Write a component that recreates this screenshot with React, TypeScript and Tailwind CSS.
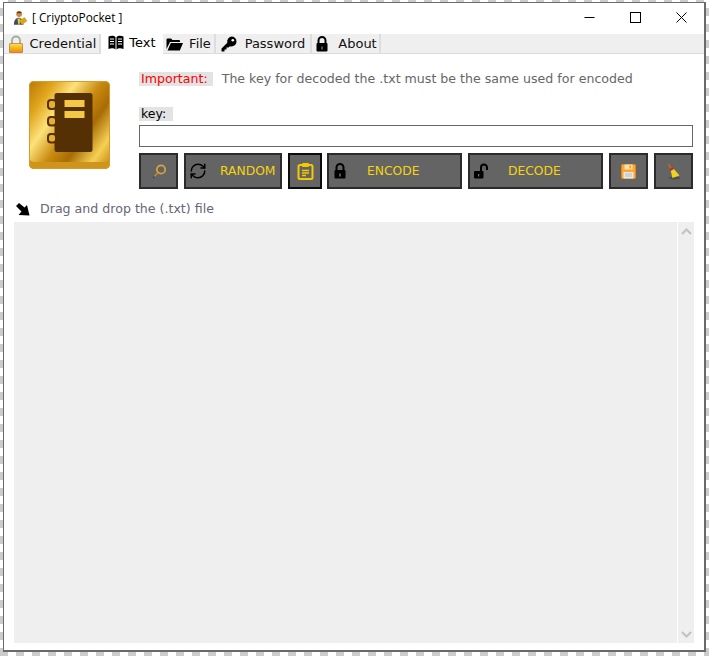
import { RefreshCw } from 'lucide-react';
import type { ReactNode } from 'react';

const uiFont = 'font-["DejaVu_Sans",sans-serif]';

function Padlock({ open = false, size = 16 }: { open?: boolean; size?: number }) {
  return (
    <svg width={size} height={size} viewBox="0 0 16 16">
      {open ? (
        <>
          <path d="M8 8V4.500a3 3 0 0 1 6 0V7" fill="none" stroke="#000" strokeWidth="2" />
          <rect x="1" y="8" width="9.500" height="7.500" rx="1" fill="#000" />
          <rect x="5.200" y="11" width="1" height="2.500" fill="#888" />
        </>
      ) : (
        <>
          <path d="M4.500 8V4.500a3.500 3.500 0 0 1 7 0V8" fill="none" stroke="#000" strokeWidth="2" />
          <rect x="2.500" y="7" width="11" height="8.500" rx="1" fill="#000" />
          <rect x="7.500" y="10.500" width="1" height="3" fill="#aaa" />
        </>
      )}
    </svg>
  );
}

function GoldLock() {
  return (
    <svg width="16" height="18" viewBox="0 0 16 18">
      <defs>
        <linearGradient id="lockBody" x1="0" y1="0" x2="0" y2="1">
          <stop offset="0" stopColor="#ffe14d" />
          <stop offset="1" stopColor="#f08a00" />
        </linearGradient>
      </defs>
      <path d="M4 9V5.500a4 4 0 0 1 8 0V9" fill="none" stroke="#a8a8a0" strokeWidth="1.800" />
      <rect x="1.500" y="8.500" width="13" height="9" rx="0.500" fill="url(#lockBody)" stroke="#9a6a10" strokeWidth="0.600" />
    </svg>
  );
}

function BookIcon() {
  return (
    <svg width="16" height="15" viewBox="0 0 16 15">
      <path d="M0.500 1.500C3 0.500 6 0.500 7.500 2v12.500C6 13 3 13 0.500 14zM15.500 1.500C13 0.500 10 0.500 8.500 2v12.500c1.500-1.500 4.500-1.500 7-.5z" fill="#000" />
      <path d="M2 4h4M2 6.500h4M2 9h4M10 4h4M10 6.500h4M10 9h4" stroke="#fff" strokeWidth="1" />
    </svg>
  );
}

function FolderIcon() {
  return (
    <svg width="17" height="14" viewBox="0 0 17 14">
      <path d="M0.500 12V2.500a1 1 0 0 1 1-1h3.500l1.500 1.500H13a1 1 0 0 1 1 1V5H4L0.500 12z" fill="#000" />
      <path d="M1.500 13.500L4.800 6H17l-3.200 7.500z" fill="#000" />
    </svg>
  );
}

function KeyIcon() {
  return (
    <svg width="16" height="16" viewBox="0 0 16 16">
      <path d="M10.500 0.500a5 5 0 0 1 0 10 5 5 0 0 1-1.600-.3L7.500 11.500H5.500v2h-2v2H0.500v-3l5.800-5.800a5 5 0 0 1 4.200-6.200z" fill="#000" />
      <circle cx="11.800" cy="4.200" r="1.300" fill="#fff" />
    </svg>
  );
}

function AppIcon() {
  return (
    <svg width="14" height="17" viewBox="0 0 16 18">
      <circle cx="7" cy="4" r="3.200" fill="#c98a4a" />
      <path d="M4 3a3 2.400 0 0 1 6 0z" fill="#6b3d12" />
      <path d="M1 16c0-5 2.500-8 5.500-8s5.500 3 5.500 8z" fill="#3d4a6b" />
      <path d="M5 9l3.500 0-1 7h-1.500z" fill="#e8c040" />
      <rect x="8" y="9.500" width="7.500" height="5.500" rx="1" transform="rotate(-35 11 12)" fill="#d9a520" />
    </svg>
  );
}

function Loupe() {
  return (
    <svg width="16" height="17" viewBox="0 0 16 17">
      <circle cx="10" cy="6.500" r="4.200" fill="none" stroke="#d9a53a" strokeWidth="1.700" />
      <path d="M6.800 9.800L2 15" stroke="#c98a22" strokeWidth="1.500" />
      <path d="M2 15l1.500-1.500" stroke="#2b4a8f" strokeWidth="2" />
    </svg>
  );
}

function FloppyIcon() {
  return (
    <svg width="15" height="15" viewBox="0 0 15 15">
      <rect x="0.500" y="0.500" width="14" height="14" rx="1" fill="#f9a832" stroke="#e08a1a" />
      <rect x="3.500" y="0.500" width="8" height="5" fill="#fde0b0" />
      <rect x="8.500" y="1.500" width="1.500" height="3" fill="#e09a30" />
      <rect x="2.500" y="8" width="10" height="6.500" fill="#e8e8e8" />
      <path d="M4 10h7M4 12h7" stroke="#bbb" />
    </svg>
  );
}

function BroomIcon() {
  return (
    <svg width="14" height="17" viewBox="0 0 14 17">
      <ellipse cx="7.500" cy="15" rx="6" ry="1.500" fill="#4d4d4d" />
      <path d="M1.500 1L4.500 6.500" stroke="#a8702c" strokeWidth="1.800" />
      <path d="M3.500 7L6.500 5.500L12.500 12.500L5.500 15z" fill="#ecd224" />
      <path d="M3.200 7L6.500 5.200" stroke="#d02020" strokeWidth="2" />
    </svg>
  );
}

function DownRightArrow() {
  return (
    <svg width="14" height="13" viewBox="0 0 14 13">
      <path d="M0 3L3 0L8.500 4.500L11 2L13.500 12.500L2.500 12L5.500 8.500z" fill="#000" />
    </svg>
  );
}

function Notebook() {
  return (
    <div className="w-[81px] h-[88px] rounded-[5px] bg-[linear-gradient(125deg,#b77708_0%,#e0a51c_18%,#fde27a_34%,#c88a0e_52%,#a86c06_66%,#f6d055_84%,#bb7e0c_100%)] shadow-[inset_0_0_0_1px_#d99a2a,inset_0_-7px_0_#d1941a] flex items-start justify-center pt-[9px]">
      <svg width="46" height="63" viewBox="0 0 46 63">
        <rect x="7.500" y="3" width="38" height="59" rx="2.500" fill="#543004" />
        <rect x="1" y="10" width="8" height="9" rx="3" fill="#e8b030" stroke="#543004" strokeWidth="2" />
        <rect x="1" y="27" width="8" height="8.500" rx="3" fill="#e8b030" stroke="#543004" strokeWidth="2" />
        <rect x="1" y="44" width="8" height="8.500" rx="3" fill="#e8b030" stroke="#543004" strokeWidth="2" />
        <rect x="17.500" y="10" width="20" height="7" fill="#f4c844" />
        <rect x="17.500" y="21" width="20" height="7" fill="#f4c844" />
      </svg>
    </div>
  );
}

function ActionButton({ className, children }: { className: string; children: ReactNode }) {
  return (
    <button className={`h-9 flex items-center shrink-0 bg-[#646464] border-2 border-[#2b2b2b] text-[12.300px] text-[#f5d40e] ${className}`}>
      {children}
    </button>
  );
}

const tabs = [
  { label: 'Credential', icon: <GoldLock />, width: 'w-[96px]' },
  { label: 'Text', icon: <BookIcon />, width: 'w-[62px]', active: true },
  { label: 'File', icon: <FolderIcon />, width: 'w-[53px]' },
  { label: 'Password', icon: <KeyIcon />, width: 'w-[96px]', gap: 'gap-[8px]' },
  { label: 'About', icon: <Padlock />, width: 'w-[69px]', gap: 'gap-[8px]' },
];

export default function App() {
  return (
    <div className="w-[709px] h-[656px] overflow-hidden pt-[2px] pl-[3px] bg-[repeating-conic-gradient(#cccccc_0_25%,#ffffff_0_50%)] bg-[length:16px_16px]">
      <div className={`w-[703px] h-[650px] bg-white border border-[#6a6a6a] border-r-2 border-b-2 flex flex-col ${uiFont}`}>
        <div className="h-[31px] shrink-0 flex items-center pl-[9px] pb-[1px]">
          <AppIcon />
          <span className='ml-[5px] text-[11.800px] text-[#000000] font-["Open_Sans",sans-serif]'>[ CriyptoPocket ]</span>
          <div className="ml-auto flex items-center mb-[1px]">
            <svg width="11" height="11" viewBox="0 0 11 11" className="mr-[35px]"><path d="M0.500 5.500h10" stroke="#000" /></svg>
            <svg width="11" height="11" viewBox="0 0 11 11" className="mr-[35px]"><rect x="0.500" y="0.500" width="10" height="10" fill="none" stroke="#000" /></svg>
            <svg width="11" height="11" viewBox="0 0 11 11" className="mr-[17px]"><path d="M0.500 0.500l10 10M10.500 0.500l-10 10" stroke="#000" /></svg>
          </div>
        </div>

        <div className="h-[20px] shrink-0 bg-[#efefef] border-b border-[#dddddd] flex pl-[1px]">
          {tabs.map((tab) =>
            tab.active ? (
              <div key={tab.label} className={`${tab.width} h-[23px] -mt-[3px] bg-white flex items-center justify-center gap-[6px] text-[13px] text-black relative`}>
                {tab.icon}
                <span className="-ml-[1px]">{tab.label}</span>
              </div>
            ) : (
              <div key={tab.label} className={`${tab.width} h-[20px] border-r-2 border-[#dddddd] flex items-center justify-center ${tab.gap ?? 'gap-[6px]'} text-[13px] text-[#111111]`}>
                {tab.icon}
                <span>{tab.label}</span>
              </div>
            ),
          )}
        </div>

        <div className="flex-1 flex flex-col pl-[10px] pr-[10px] pb-[7px]">
          <div className="flex h-[135px] shrink-0">
            <div className="w-[125px] shrink-0 pl-[15px] pt-[27px]">
              <Notebook />
            </div>
            <div className="flex-1 min-w-0 flex flex-col">
              <div className="mt-[17px] h-[16px] flex items-center text-[12.600px] text-[#666666] whitespace-nowrap">
                <span className="bg-[#e3e3e3] text-[#ff0000] pl-[2px] pr-[5px] h-[14px] leading-[14px]">Important:</span>
                <span className="ml-[9px]">The key for decoded the .txt must be the same used for encoded</span>
              </div>
              <div className="mt-[20px] h-[14px] w-[34px] bg-[#e3e3e3] text-[12.500px] leading-[14px] text-black pl-[2px]">key:</div>
              <input className="mt-[4px] h-[22px] w-[554px] border border-[#666666] bg-white outline-none" readOnly />
              <div className="mt-[6px] flex gap-[6px]">
                <ActionButton className="w-[39px] justify-center"><Loupe /></ActionButton>
                <ActionButton className="w-[98px] pl-[3px]">
                  <RefreshCw size={18} color="#000000" strokeWidth={2} />
                  <span className="ml-[13px] mt-[1px]">RANDOM</span>
                </ActionButton>
                <ActionButton className="w-[34px] justify-center !border-[#0c0c0c]">
                  <svg width="17" height="18" viewBox="0 0 17 18">
                    <rect x="1.500" y="3" width="14" height="14" rx="1.500" fill="none" stroke="#f5c800" strokeWidth="2" />
                    <rect x="5" y="1" width="7" height="4" rx="1" fill="#f5c800" />
                    <path d="M5 8.500h7M5 11h7M5 13.500h4" stroke="#f5c800" strokeWidth="1.300" />
                  </svg>
                </ActionButton>
                <ActionButton className="w-[135px] pl-[3px] -ml-px">
                  <Padlock />
                  <span className="ml-[19px] mt-[1px]">ENCODE</span>
                </ActionButton>
                <ActionButton className="w-[135px] pl-[3px]">
                  <Padlock open />
                  <span className="ml-[19px] mt-[1px]">DECODE</span>
                </ActionButton>
                <ActionButton className="w-[39px] justify-center"><FloppyIcon /></ActionButton>
                <ActionButton className="w-[39px] justify-center"><BroomIcon /></ActionButton>
              </div>
            </div>
          </div>

          <div className="h-[33px] shrink-0 flex items-center pl-[2px] pt-[8px] text-[12.600px] text-[#666677]">
            <DownRightArrow />
            <span className="ml-[10px]">Drag and drop the (.txt) file</span>
          </div>

          <div className="flex-1 min-h-0 flex bg-[#efefef]">
            <div className="flex-1" />
            <div className="w-[17px] border-l border-white flex flex-col items-center justify-between pt-[6px] pb-[5px]">
              <svg width="11" height="7" viewBox="0 0 11 7"><path d="M1 6l4.500-4.500L10 6" fill="none" stroke="#c2c2c2" strokeWidth="2" /></svg>
              <svg width="11" height="7" viewBox="0 0 11 7"><path d="M1 1l4.500 4.500L10 1" fill="none" stroke="#c2c2c2" strokeWidth="2" /></svg>
            </div>
          </div>
        </div>
      </div>
    </div>
  );
}
